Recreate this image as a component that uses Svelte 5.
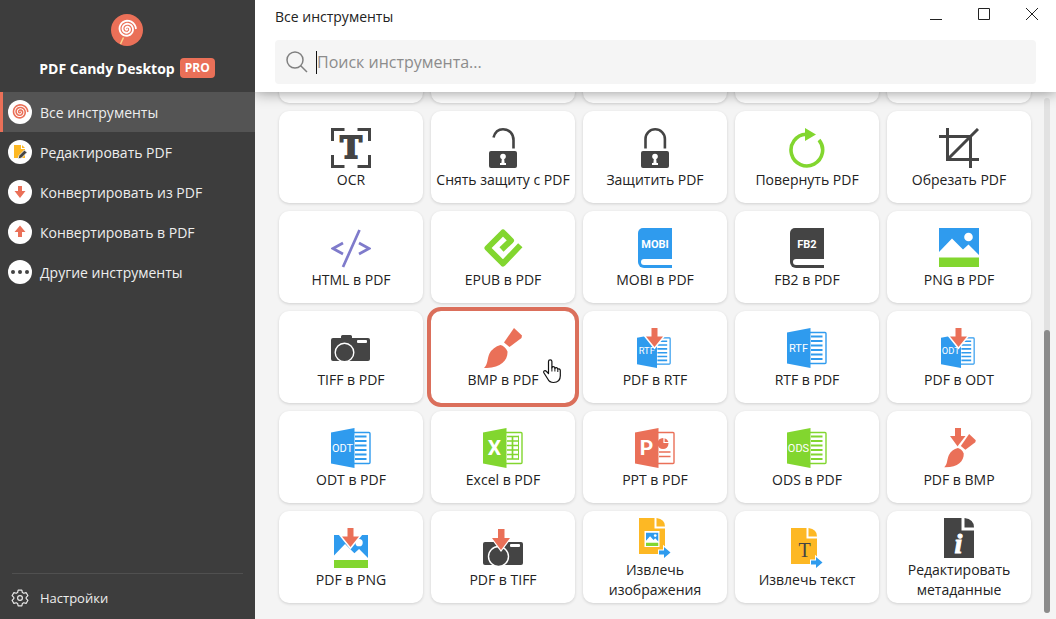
<script>
    const blue = "#2f9bee";
    const green = "#82d62f";
    const coral = "#ea7058";
    const dark = "#444444";
    const yellow = "#fdb824";

    const menu = [
        { icon: "candy", label: "Все инструменты" },
        { icon: "edit", label: "Редактировать PDF" },
        { icon: "down", label: "Конвертировать из PDF" },
        { icon: "up", label: "Конвертировать в PDF" },
        { icon: "dots", label: "Другие инструменты" },
    ];

    const tools = [
        { icon: "ocr", label: "OCR" },
        { icon: "unlock", label: "Снять защиту с PDF" },
        { icon: "lock", label: "Защитить PDF" },
        { icon: "rotate", label: "Повернуть PDF" },
        { icon: "crop", label: "Обрезать PDF" },
        { icon: "html", label: "HTML в PDF" },
        { icon: "epub", label: "EPUB в PDF" },
        { icon: "book", text: "MOBI", color: blue, label: "MOBI в PDF" },
        { icon: "book", text: "FB2", color: dark, label: "FB2 в PDF" },
        { icon: "png", label: "PNG в PDF" },
        { icon: "tiff", label: "TIFF в PDF" },
        { icon: "bmp", label: "BMP в PDF" },
        { icon: "doc", text: "RTF", color: blue, from: true, label: "PDF в RTF" },
        { icon: "doc", text: "RTF", color: blue, label: "RTF в PDF" },
        { icon: "doc", text: "ODT", color: blue, from: true, label: "PDF в ODT" },
        { icon: "doc", text: "ODT", color: blue, label: "ODT в PDF" },
        { icon: "doc", text: "X", color: green, label: "Excel в PDF" },
        { icon: "doc", text: "P", color: coral, label: "PPT в PDF" },
        { icon: "doc", text: "ODS", color: green, label: "ODS в PDF" },
        { icon: "bmp", from: true, label: "PDF в BMP" },
        { icon: "png", from: true, label: "PDF в PNG" },
        { icon: "tiffFrom", label: "PDF в TIFF" },
        { icon: "images", label: "Извлечь изображения" },
        { icon: "text", label: "Извлечь текст" },
        { icon: "meta", label: "Редактировать метаданные" },
    ];

    let active = $state("Все инструменты");
    let hovered = $state("BMP в PDF");
    let query = $state("");

    // candy swirl, drawn from the centre outwards
    function spiral(cx, cy, radius, turns) {
        const points = [];
        const steps = turns * 24;
        for (let i = 0; i <= steps; i++) {
            const a = (i / 24) * Math.PI * 2;
            const r = (radius * i) / steps;
            points.push((cx + r * Math.cos(a)).toFixed(2) + " " + (cy + r * Math.sin(a)).toFixed(2));
        }
        return "M" + points.join("L");
    }
</script>

{#snippet menuIcon(name)}
    <svg class="menu__icon" viewBox="0 0 24 24" aria-hidden="true">
        <circle cx="12" cy="12" r="12" fill="#fff" />
        {#if name === "candy"}
            <path d={spiral(12, 12, 7.8, 3)} fill="none" stroke={coral} stroke-width="1.6" />
        {:else if name === "edit"}
            <path d="M6 5h7v4h4v9H6z" fill={yellow} />
            <path d="M14 5l3 3h-3z" fill={yellow} />
            <path d="M10 19l1-3.5 5.5-5.5 2.5 2.5-5.5 5.5z" fill={dark} stroke="#fff" stroke-width=".8" />
        {:else if name === "down"}
            <path d="M10 6h4v5h3.5L12 18l-5.500-7H10z" fill={coral} />
        {:else if name === "up"}
            <path d="M10 17h4v-5h3.5L12 5.5 6.5 12H10z" fill={coral} />
        {:else}
            <circle cx="5" cy="12" r="2" fill={dark} />
            <circle cx="12" cy="12" r="2" fill={dark} />
            <circle cx="19" cy="12" r="2" fill={dark} />
        {/if}
    </svg>
{/snippet}

{#snippet arrow()}
    <path d="M16.5 0h6v8.5H28L19.500 19 11 8.5h5.5z" fill={coral} stroke="#fff" stroke-width="3" paint-order="stroke" />
{/snippet}

{#snippet lockBody()}
    <rect x="6" y="23" width="28" height="17" rx="2" fill={dark} />
    <circle cx="20" cy="28.5" r="2.8" fill="#fff" />
    <path d="M19 29h2l.6 6H23v2h-6v-2h1.400z" fill="#fff" />
{/snippet}

{#snippet photo()}
    <path d="M0 0h40v27L29.5 16.5 24 21.500 13 10.500 0 24z" fill={blue} />
    <circle cx="29.5" cy="9" r="4.3" fill="#fff" />
    <path d="M0 29.500h40V39H0z" fill={green} />
{/snippet}

{#snippet brush()}
    <path d="M31 0l8 7.500-.5 2.500L26.500 19l-5.500-4.500z" fill={coral} />
    <path d="M17.500 17q4.500 1 7 6.500C25 33 17 40.500 1 40c4-3.500 3-9 5.500-14.500Q10 19 17.500 17z" fill={coral} />
{/snippet}

{#snippet office(text, color)}
    <rect x="22" y="4.5" width="17" height="31" rx="1" fill="#fff" stroke={color} stroke-width="1.4" />
    {#if text === "X"}
        <path d="M24 8.500h11.500M24 13h11.500M24 17.500h11.500M24 22h11.500M24 26.500h11.500M24 31h11.500M29.500 8v23.500" fill="none" stroke={color} stroke-width="1.7" />
        <path d="M35.500 7.700v24.100" stroke={color} stroke-width="1" />
    {:else if text === "P"}
        <circle cx="28" cy="15.5" r="5.5" fill={color} />
        <path d="M29 9v5.500h6" fill="none" stroke="#fff" stroke-width="1.2" />
        <path d="M24 24h11.500M24 28.500h11.500" stroke={color} stroke-width="1.6" />
    {:else}
        <path d="M24 8.500h11.500M24 13h11.500M24 17.500h11.500M24 22h11.500M24 26.500h11.500M24 31h11.500" stroke={color} stroke-width="1.9" />
    {/if}
    <path d="M0 4.500L23.500 0v40L0 35.500z" fill={color} />
    {#if text.length === 1}
        <text x="11.5" y="27" class="letter">{text}</text>
    {:else}
        <text x="11.5" y="24" class="short">{text}</text>
    {/if}
{/snippet}

{#snippet sheet()}
    <path d="M4 0h15.500v10.500H30V36H4z" fill={yellow} />
    <path d="M21.500 0Q30 1 30 8.500h-8.500z" fill={yellow} />
    <path d="M24 32.500h5V29l6.500 5.500L29 40v-3.500h-5z" fill={blue} stroke="#fff" stroke-width="2" paint-order="stroke" />
{/snippet}

{#snippet toolIcon(tool)}
    <svg class="tool__icon" viewBox="0 0 40 40" aria-hidden="true">
        {#if tool.icon === "ocr"}
            <path d="M1.500 13V1.500H13.500M26.500 1.500H38.500V13M38.500 27V38.500H26.500M13.500 38.500H1.500V27" fill="none" stroke={dark} stroke-width="3" />
            <text x="20" y="30" class="slab">T</text>
        {:else if tool.icon === "unlock"}
            <path d="M10.500 9.500C12 4 16 1.300 20 1.300 26.500 1.300 30.500 6 30.500 12v8.500" fill="none" stroke={dark} stroke-width="2.6" />
            {@render lockBody()}
        {:else if tool.icon === "lock"}
            <path d="M10.500 20.500V11a9.700 9.700 0 0 1 19.400 0v9.500" fill="none" stroke={dark} stroke-width="2.6" />
            {@render lockBody()}
        {:else if tool.icon === "rotate"}
            <path d="M32 12A15.800 15.800 0 1 1 19 6.300" fill="none" stroke={green} stroke-width="3.6" />
            <path d="M18 0l11 6.500L18 13z" fill={green} />
        {:else if tool.icon === "crop"}
            <path d="M8.500 0v31.500H40M0 8.500h31.500V40M9 31L39 1" fill="none" stroke={dark} stroke-width="3" />
        {:else if tool.icon === "html"}
            <path d="M12 15L2 20.500 12 26M28 15l10 5.500L28 26M28.500 2L12 39" fill="none" stroke="#7f7bcb" stroke-width="2.7" />
        {:else if tool.icon === "epub"}
            <path d="M37.300 17.300L20 35.500 4.500 20 20 4.500 28 12.500 18.500 21.500" fill="none" stroke={green} stroke-width="6" stroke-linejoin="round" />
        {:else if tool.icon === "book"}
            <path d="M8 0h29v40H9a6 6 0 0 1-6-6V5a5 5 0 0 1 5-5z" fill={tool.color} />
            <path d="M37 31H9a3 3 0 0 0 0 6h28z" fill="#fff" />
            <text x="20" y="20" class="title">{tool.text}</text>
        {:else if tool.icon === "png"}
            {#if tool.from}
                <svg x="3" y="7" width="34" height="34" viewBox="0 0 40 40">{@render photo()}</svg>
                {@render arrow()}
            {:else}
                {@render photo()}
            {/if}
        {:else if tool.icon === "tiff"}
            <path d="M2 10h8V8.500Q10 7 11.500 7h8Q21 7 21 8.500V10h16a2 2 0 0 1 2 2v19a2 2 0 0 1-2 2H2a2 2 0 0 1-2-2V12a2 2 0 0 1 2-2z" fill={dark} />
            <circle cx="13.5" cy="24.5" r="9.3" fill="none" stroke="#fff" stroke-width="1.4" />
            <rect x="26" y="12" width="10" height="3" rx="1" fill="#fff" />
        {:else if tool.icon === "tiffFrom"}
            <rect y="14" width="40" height="23" rx="2" fill={dark} />
            <circle cx="15.5" cy="28.5" r="10" fill={dark} stroke="#fff" stroke-width="1.4" />
            <rect x="27" y="16" width="10" height="3" rx="1" fill="#fff" />
            <path d="M15 1h6.500v9H27l-9 12-9-12h6z" fill={coral} stroke="#fff" stroke-width="2.4" paint-order="stroke" />
        {:else if tool.icon === "bmp"}
            {#if tool.from}
                <path d="M16 0h6v8h5.500L19 19 11 8h5z" fill={coral} />
                <svg x="4" y="6" width="34" height="34" viewBox="0 0 40 41">
                    <path d="M31 0L18 17" stroke="#fff" stroke-width="4" />
                    {@render brush()}
                </svg>
            {:else}
                {@render brush()}
            {/if}
        {:else if tool.icon === "doc"}
            {#if tool.from}
                <svg x="2" y="6" width="34" height="34" viewBox="0 0 40 40">{@render office(tool.text, tool.color)}</svg>
                {@render arrow()}
            {:else}
                {@render office(tool.text, tool.color)}
            {/if}
        {:else if tool.icon === "images"}
            {@render sheet()}
            <path d="M9.500 13h15v16h-15z" fill="#fff" />
            <svg x="11" y="14.5" width="12.5" height="13.5" viewBox="0 0 40 39" preserveAspectRatio="none">{@render photo()}</svg>
        {:else if tool.icon === "text"}
            {@render sheet()}
            <text x="17.5" y="29" class="serif">T</text>
        {:else}
            <path d="M5 0h17.500v12.500H35V40H5z" fill={dark} />
            <path d="M25.500 0Q35 1 35 9.500h-9.500z" fill={dark} />
            <text x="19.5" y="34.5" class="info">i</text>
        {/if}
    </svg>
{/snippet}

<div class="app">
    <aside class="sidebar">
        <div class="brand">
            <svg class="brand__logo" viewBox="0 0 32 32" aria-hidden="true">
                <circle cx="16" cy="16" r="16" fill={coral} />
                <path d="M12.500 23.500L9.500 30" stroke="#fbd48c" stroke-width="1.5" />
                <path d={spiral(16, 15, 9, 3)} fill="none" stroke="#fff" stroke-width="1.8" />
            </svg>
            <div class="brand__name">PDF Candy Desktop <span class="brand__badge">PRO</span></div>
        </div>
        <nav class="menu">
            {#each menu as item}
                <button class="menu__item" class:active={active === item.label} onclick={() => (active = item.label)}>
                    {@render menuIcon(item.icon)}
                    {item.label}
                </button>
            {/each}
        </nav>
        <div class="settings">
            <button class="menu__item">
                <svg class="menu__icon" viewBox="-1 -1 26 26" fill="none" stroke="#e8e8e8" stroke-width="1.3" stroke-linejoin="round" aria-hidden="true">
                    <path d="M10 3.500h4l.6 2.600 1.500.8 2.500-.8 2 3.400-1.900 1.900v1.200l1.900 1.900-2 3.400-2.500-.8-1.500.8-.6 2.600h-4l-.6-2.600-1.500-.8-2.500.8-2-3.400 1.900-1.900v-1.200L3.400 9.500l2-3.400 2.500.8 1.500-.8z" />
                    <circle cx="12" cy="12" r="2.6" />
                </svg>
                Настройки
            </button>
        </div>
    </aside>

    <main class="main">
        <header class="header">
            <div class="titlebar">
                <h1>Все инструменты</h1>
                <div class="window">
                    <button aria-label="Свернуть"><svg viewBox="0 0 14 14"><path d="M1 12.500h12" /></svg></button>
                    <button aria-label="Развернуть"><svg viewBox="0 0 14 14"><path d="M1.500 1.500h11v11h-11z" /></svg></button>
                    <button aria-label="Закрыть"><svg viewBox="0 0 14 14"><path d="M1 1l12 12M13 1L1 13" /></svg></button>
                </div>
            </div>
            <label class="search">
                <svg class="search__icon" viewBox="0 0 22 22" aria-hidden="true">
                    <circle cx="9" cy="9" r="8" />
                    <path d="M14.700 14.700L21 21" />
                </svg>
                <input type="text" placeholder="Поиск инструмента..." aria-label="Поиск инструмента" bind:value={query} />
            </label>
        </header>

        <div class="content">
            <div class="tools">
                {#each Array(5) as _}
                    <div class="tool"></div>
                {/each}
                {#each tools as tool}
                    <button class="tool" class:hovered={hovered === tool.label} onmouseenter={() => (hovered = tool.label)}>
                        {@render toolIcon(tool)}
                        <span>{tool.label}</span>
                        {#if hovered === tool.label}
                            <svg class="pointer" viewBox="0 0 18 25" aria-hidden="true">
                                <path d="M5.500 14.500V2.500a1.700 1.700 0 0 1 3.400 0V9q.3-1.500 1.600-1.300 1.400.1 1.400 1.800.4-1 1.500-.9 1.400.1 1.400 1.700.5-.7 1.300-.5 1.200.3 1.200 1.800v5.200q0 6.700-6.800 6.700-4 0-5.700-3.500L1 14q-.8-1.600.5-2.200 1-.4 2 .7z" fill="#fff" stroke="#111" stroke-width="1.2" stroke-linejoin="round" />
                                <path d="M8.900 8.500v4M11.900 9.500v3M14.800 10.500v2.500" stroke="#111" stroke-width="1" />
                            </svg>
                        {/if}
                    </button>
                {/each}
            </div>
            <div class="scrollbar"><div class="scrollbar__thumb"></div></div>
        </div>
    </main>
</div>

<style>
    :global(body) {
        margin: 0;
        font-family: "Open Sans", "Noto Sans", sans-serif;
        font-size: 14px;
    }

    button {
        border: none;
        padding: 0;
        background: none;
        font: inherit;
        cursor: pointer;
    }

    svg {
        display: block;
        flex: none;
    }

    .app {
        display: grid;
        grid-template-columns: 255px minmax(0, 1fr);
        height: 100vh;
        overflow: hidden;
    }

    .sidebar {
        display: flex;
        flex-direction: column;
        background-color: #3d3d3d;
        color: #eeeeee;
    }

    .brand {
        display: flex;
        flex-direction: column;
        align-items: center;
        gap: 12px;
        padding: 14px 1px 14px 0;
    }

    .brand__logo {
        width: 32px;
        height: 32px;
    }

    .brand__name {
        display: flex;
        align-items: center;
        gap: 5px;
        height: 20px;
        color: #ffffff;
        font-weight: 700;
        white-space: nowrap;
    }

    .brand__badge {
        padding: 0 5px;
        border-radius: 4px;
        background-color: #ea7058;
        font-size: 12px;
        line-height: 20px;
    }

    .menu__item {
        display: flex;
        align-items: center;
        gap: 8px;
        width: 100%;
        height: 40px;
        padding-left: 8px;
        color: inherit;
        text-align: left;
        white-space: nowrap;
    }

    .menu__item.active {
        background-color: #545454;
        box-shadow: inset 3px 0 #ea7058;
    }

    .menu__icon {
        width: 24px;
        height: 24px;
    }

    .settings {
        margin-top: auto;
        padding: 5px 0 1px;
        background: linear-gradient(#505050, #505050) 12px 0 / calc(100% - 24px) 1px no-repeat;
        font-size: 13px;
    }

    .main {
        display: flex;
        flex-direction: column;
        min-width: 0;
        min-height: 0;
        overflow: hidden;
        background-color: #f4f4f4;
    }

    .header {
        position: relative;
        z-index: 1;
        padding: 0 20px 8px;
        background-color: #ffffff;
        box-shadow: 0 0 14px rgba(0, 0, 0, 0.45);
    }

    .titlebar {
        display: flex;
        justify-content: space-between;
        height: 40px;
    }

    h1 {
        margin: 0;
        color: #222222;
        font-size: 14px;
        font-weight: 400;
        line-height: 34px;
    }

    .window {
        display: flex;
        gap: 34px;
        margin-right: -3px;
        padding-top: 7px;
    }

    .window svg {
        width: 14px;
        height: 14px;
        fill: none;
        stroke: #222222;
    }

    .window button {
        align-self: flex-start;
    }

    .search {
        display: flex;
        align-items: center;
        gap: 8px;
        height: 44px;
        padding: 0 11px;
        border-radius: 4px;
        background-color: #f5f5f5;
    }

    .search__icon {
        width: 22px;
        height: 22px;
        fill: none;
        stroke: #808080;
        stroke-width: 1.5;
    }

    .search input {
        flex: 1;
        height: 23px;
        padding: 0;
        border: none;
        border-left: 1px solid #111111;
        outline: none;
        background: none;
        font: inherit;
        font-size: 16px;
    }

    .search input::placeholder {
        color: #8c8c8c;
        opacity: 1;
    }

    .content {
        flex: 1;
        display: flex;
        justify-content: space-between;
        gap: 13px;
        min-height: 0;
        padding: 0 6px 6px 24px;
    }

    .tools {
        flex: 1;
        display: grid;
        grid-template-columns: repeat(5, minmax(0, 1fr));
        grid-auto-rows: minmax(92px, auto);
        align-content: end;
        gap: 8px;
        padding-bottom: 10px;
    }

    .tool {
        position: relative;
        display: flex;
        flex-direction: column;
        align-items: center;
        justify-content: center;
        gap: 2px;
        padding-top: 4px;
        border-radius: 10px;
        box-sizing: border-box;
        background-color: #ffffff;
        box-shadow: 0 1px 3px rgba(0, 0, 0, 0.15);
        color: #222222;
        line-height: 20px;
    }

    .tool.hovered {
        outline: 4px solid #db6f5b;
    }

    .tool__icon {
        width: 40px;
        height: 40px;
    }

    .pointer {
        position: absolute;
        right: 14px;
        top: 48px;
        width: 18px;
        height: 25px;
    }

    .scrollbar {
        display: flex;
        flex-direction: column;
        justify-content: flex-end;
        width: 6px;
        margin-top: 6px;
        border-radius: 3px;
        background-color: #e2e2e2;
    }

    .scrollbar__thumb {
        height: 55%;
        border-radius: 3px;
        background-color: #8b8b8b;
    }

    text {
        fill: #ffffff;
        text-anchor: middle;
    }

    .slab {
        fill: #444444;
        stroke: #444444;
        stroke-width: 2px;
        font: 700 29px "DejaVu Serif", "Liberation Serif", serif;
    }

    .title {
        font: 700 11px Roboto, sans-serif;
    }

    .letter {
        font: 700 21px Roboto, sans-serif;
    }

    .short {
        font: 400 11px Roboto, sans-serif;
    }

    .serif {
        fill: #444444;
        font: 400 20px "Liberation Serif", serif;
    }

    .info {
        stroke: #ffffff;
        font: italic 700 28px "Liberation Serif", serif;
    }
</style>
